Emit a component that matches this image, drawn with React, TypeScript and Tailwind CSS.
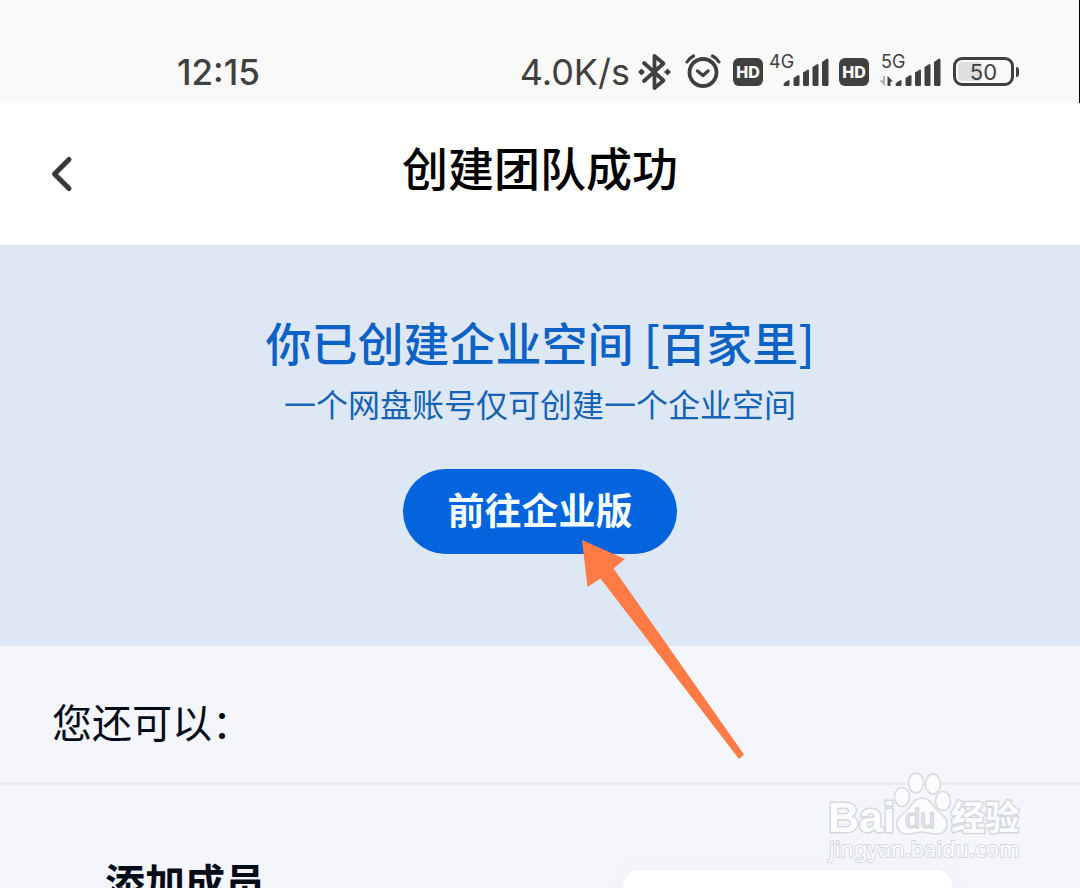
const cjk = "font-['Noto_Sans_CJK_SC',sans-serif]";

function BluetoothIcon() {
  return (
    <svg className="h-[38px] w-[33px] shrink-0" viewBox="0 0 33 38" fill="none">
      <path
        d="M6 10 L25.5 27.5 L16.5 35 V3 L25.5 10.5 L6 28"
        stroke="currentColor"
        strokeWidth="3.8"
        strokeLinejoin="round"
        strokeLinecap="round"
      />
      <path d="M0 19 L3.5 15.5 L7 19 L3.5 22.5 Z" fill="currentColor" />
      <path d="M26 19 L29.5 15.5 L33 19 L29.5 22.5 Z" fill="currentColor" />
    </svg>
  );
}

function AlarmIcon() {
  return (
    <svg
      className="h-[36px] w-[36px] shrink-0"
      viewBox="0 0 36 36"
      fill="none"
      stroke="currentColor"
      strokeLinecap="round"
      strokeLinejoin="round"
    >
      <circle cx="18" cy="18.5" r="13.5" strokeWidth="3.8" />
      <path d="M12.5 17 L18 21.5 L23 17" strokeWidth="3.4" />
      <path d="M2 8 Q4.5 4 8.5 2 M27.5 2 Q31.5 4 34 8" strokeWidth="3.2" />
    </svg>
  );
}

function HdBadge() {
  return (
    <span className="flex h-7 w-[30px] shrink-0 items-center justify-center rounded-md bg-[#404040] text-base leading-none font-extrabold text-white">
      HD
    </span>
  );
}

function Signal({ label, data = false }: { label: string; data?: boolean }) {
  return (
    <span className="relative block h-9 w-[60px] shrink-0">
      <span className="absolute -top-1 left-0 text-lg leading-6">{label}</span>
      <svg className="h-9 w-[60px] overflow-visible" viewBox="0 0 60 36" fill="currentColor">
        {data && (
          <>
            <path d="M4 22 V32 L-1.5 26.500 H2 V22 Z" opacity="0.4" />
            <path d="M6.500 32 V22 L12 27.500 H9.500 V32 Z" />
          </>
        )}
        <path d="M14.500 31 Q14.500 28 20.500 26 V30.500 Q20.500 32 19 32 H16 Q14.500 32 14.500 31 Z" />
        <path d="M24.500 24 L29.500 21 Q30.500 21 30.500 22 V30.500 Q30.500 32 29 32 H26 Q24.500 32 24.500 30.500 Z" />
        <path d="M34 18.500 L39 15.500 Q40 15.500 40 16.500 V30.500 Q40 32 38.500 32 H35.500 Q34 32 34 30.500 Z" />
        <path d="M43.500 13 L48.500 10 Q49.500 10 49.500 11 V30.500 Q49.500 32 48 32 H45 Q43.500 32 43.500 30.500 Z" />
        <path d="M53 8 L58 4.500 Q59.500 4.500 59.500 6 V30.500 Q59.500 32 58 32 H54.500 Q53 32 53 30.500 Z" />
      </svg>
    </span>
  );
}

function Battery({ level }: { level: number }) {
  return (
    <span className="flex shrink-0 items-center gap-0.5">
      <span className="relative flex h-[29px] w-[61px] items-center justify-center rounded-[9px] border-3 border-[#404040]">
        <span
          className="absolute inset-y-0.5 left-0.5 rounded bg-[#dedede]"
          style={{ width: `${level - 6}%` }}
        />
        <span className="relative text-[22px] leading-none">{level}</span>
      </span>
      <span className="h-2.5 w-[3px] rounded-r-sm bg-[#404040]" />
    </span>
  );
}

function StatusBar() {
  return (
    <div className="flex h-[103px] shrink-0 items-center justify-between border-r border-black bg-[#f9f9f9] pt-10 pr-[60px] pl-[177px] font-['Inter',sans-serif] text-[#404040]">
      <span className="text-[35px] leading-10 font-medium">12:15</span>
      <div className="flex items-center">
        <span className="mr-2 text-[36px] leading-10">4.0K/s</span>
        <BluetoothIcon />
        <span className="ml-3.5">
          <AlarmIcon />
        </span>
        <span className="mr-1.5 ml-3">
          <HdBadge />
        </span>
        <Signal label="4G" />
        <span className="mr-3 ml-2.5">
          <HdBadge />
        </span>
        <Signal label="5G" data />
        <span className="ml-3">
          <Battery level={50} />
        </span>
      </div>
    </div>
  );
}

function Header() {
  return (
    <header className="grid h-[142px] shrink-0 grid-cols-[1fr_auto_1fr] items-center bg-white px-8">
      <button type="button" aria-label="返回" className="justify-self-start text-[#383838]">
        <svg className="h-14 w-14" viewBox="0 0 56 56" fill="none">
          <path
            d="M37 13.500 L22.500 28 L37 42.500"
            stroke="currentColor"
            strokeWidth="5"
            strokeLinecap="round"
            strokeLinejoin="round"
          />
        </svg>
      </button>
      <h1 className="pb-4 text-[46px] leading-[60px] font-medium text-black">创建团队成功</h1>
    </header>
  );
}

function Banner() {
  return (
    <section className="flex h-[401px] shrink-0 flex-col items-center bg-[#dee8f4] pt-[66px]">
      <h2 className="text-[46px] leading-[60px] font-medium text-[#0d62c6]">你已创建企业空间 [百家里]</h2>
      <p className="mt-3 text-[32px] leading-10 text-[#1663b5]">一个网盘账号仅可创建一个企业空间</p>
      <button
        type="button"
        className="mt-[46px] h-[85px] w-[274px] rounded-full bg-[#0364dd] pb-1.5 text-[37px] leading-[60px] font-bold text-[#f4fdff]"
      >
        前往企业版
      </button>
    </section>
  );
}

function Watermark() {
  return (
    <svg
      className="pointer-events-none absolute right-[52px] bottom-[22px] h-24 w-[202px] overflow-visible"
      viewBox="0 0 202 96"
      fill="#fbfcfe"
      stroke="#d6d8dc"
      strokeWidth="1.5"
    >
      <text x="2" y="62" fontSize="43" paintOrder="stroke" strokeWidth="3" className="font-['Liberation_Sans',sans-serif] font-bold">Bai</text>
      <ellipse cx="76" cy="27" rx="7.500" ry="9.500" />
      <ellipse cx="90" cy="13" rx="7.500" ry="10" />
      <ellipse cx="107" cy="14" rx="7.500" ry="10" />
      <ellipse cx="117" cy="31" rx="7.500" ry="9.500" />
      <path d="M96 28 C105 28 107 38 115 44 C125 51 122 64 110 64 C104 64 101 62 96 62 C91 62 88 64 82 64 C70 64 67 51 77 44 C85 38 87 28 96 28 Z" />
      <text x="79" y="58" fontSize="27" fill="#f1f2f5" className="font-['Liberation_Sans',sans-serif]">du</text>
      <text x="125" y="60" fontSize="34" paintOrder="stroke" strokeWidth="3" className="font-['Noto_Sans_CJK_SC',sans-serif] font-bold">经验</text>
      <text x="3" y="87" fontSize="22" paintOrder="stroke" strokeWidth="2" className="font-['Noto_Sans',sans-serif]">jingyan.baidu.com</text>
    </svg>
  );
}

// Arrow laid over the page, tip on the button
function PointerArrow() {
  return (
    <svg
      className="pointer-events-none absolute top-[540px] left-1/2 ml-[42px] h-[220px] w-[163px]"
      viewBox="0 0 163 220"
      fill="#ff7b45"
    >
      <path d="M0 0 L43 19 L31.500 28.500 L162 214.500 L157 219 L18.500 38.500 L5.500 47 Z" />
    </svg>
  );
}

export default function App() {
  return (
    <div className={`relative flex h-screen flex-col overflow-hidden bg-[#f4f6fb] ${cjk}`}>
      <StatusBar />
      <Header />
      <Banner />
      <h3 className="shrink-0 border-b-3 border-[#ebecf0] px-[52px] pt-[45px] pb-[31px] text-[40px] leading-[60px] text-[#060b18]">
        您还可以：
      </h3>
      <section className="flex shrink-0 items-start justify-between pt-[66px] pr-32 pl-[105px]">
        <h4 className="text-[40px] leading-[60px] font-bold text-[#060b18]">添加成员</h4>
        <div className="mt-[19px] h-40 w-[329px] rounded-2xl bg-white shadow-[0_0_24px_rgba(0,0,0,0.03)]" />
      </section>
      <PointerArrow />
      <Watermark />
    </div>
  );
}
